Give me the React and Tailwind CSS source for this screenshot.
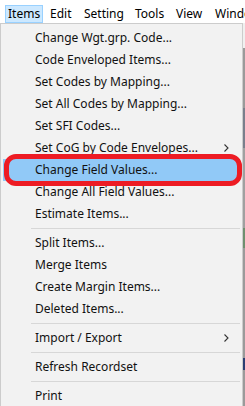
const font = { fontFamily: '"Noto Sans", "Open Sans", sans-serif' };

const Chevron = () => (
  <svg width="5" height="8" viewBox="0 0 5 8" className="absolute right-[13px] top-[7px]">
    <path d="M0.5 0.5 L4 4 L0.5 7.5" fill="none" stroke="#333" strokeWidth="1.1" />
  </svg>
);

const Row = ({ label, sub, active }) => (
  <div
    className={
      "relative h-[22px] flex items-center text-[12px] text-[#111] whitespace-nowrap " +
      (active ? "bg-[#91c9f7] mx-[2px] pl-[32px]" : "pl-[34px]")
    }
  >
    {label}
    {sub && <Chevron />}
  </div>
);

const Sep = () => (
  <div className="h-[7px] flex items-center pl-[30px] pr-[2px]">
    <div className="h-px w-full bg-[#d7d7d7]" />
  </div>
);

const menuTop = [
  "Change Wgt.grp. Code...",
  "Code Enveloped Items...",
  "Set Codes by Mapping...",
  "Set All Codes by Mapping...",
  "Set SFI Codes...",
];

const App = () => {
  return (
    <div className="w-[245px] h-[406px] overflow-hidden bg-white flex flex-col" style={font}>
      {/* Menu bar */}
      <div className="h-[23px] flex items-end text-[12px] text-black shrink-0 overflow-hidden">
        <div className="shrink-0 ml-[5px] w-[38px] h-[18px] pl-[2px] flex items-center bg-[#cce8ff] border border-[#99d1ff]">
          Items
        </div>
        <div className="shrink-0 ml-[7px] w-[34px] h-[18px] flex items-center">Edit</div>
        <div className="shrink-0 w-[51px] h-[18px] flex items-center">Setting</div>
        <div className="shrink-0 w-[41px] h-[18px] flex items-center">Tools</div>
        <div className="shrink-0 w-[39px] h-[18px] flex items-center">View</div>
        <div className="shrink-0 h-[18px] flex items-center whitespace-nowrap">Window</div>
      </div>

      <div className="flex flex-1 min-h-0">
        {/* Dropdown */}
        <div className="relative shrink-0 w-[243px] bg-[#f2f2f2] border border-b-0 border-[#cccccc] pt-[3px]">
          {menuTop.map((m) => (
            <Row key={m} label={m} />
          ))}
          <Row label="Set CoG by Code Envelopes..." sub />
          <Row label="Change Field Values..." active />
          <Row label="Change All Field Values..." />
          <Row label="Estimate Items..." />
          <Sep />
          <Row label="Split Items..." />
          <Row label="Merge Items" />
          <Row label="Create Margin Items..." />
          <Row label="Deleted Items..." />
          <Sep />
          <Row label="Import / Export" sub />
          <Sep />
          <Row label="Refresh Recordset" />
          <Sep />
          <Row label="Print" />

          {/* red annotation ring */}
          <div className="absolute left-[3px] right-0 top-[130px] h-[32px] rounded-[12px] border-[5px] border-[#ed1c24] pointer-events-none" />
        </div>

        {/* window behind */}
        <div className="flex-1 flex flex-col">
          <div className="h-[25px] bg-[#f0f0f0]" />
          <div className="h-[60px] bg-[#9a9a9a]" />
          <div className="h-[40px] bg-[#7a7f8c]" />
          <div className="h-[80px] bg-[#a0a0a0]" />
          <div className="h-[20px] bg-[#6f8f6f]" />
          <div className="h-[110px] bg-[#9a9a9a]" />
          <div className="h-[12px] bg-[#2c3e73]" />
          <div className="flex-1 bg-[#9a9a9a]" />
        </div>
      </div>
    </div>
  );
};

export default App;
